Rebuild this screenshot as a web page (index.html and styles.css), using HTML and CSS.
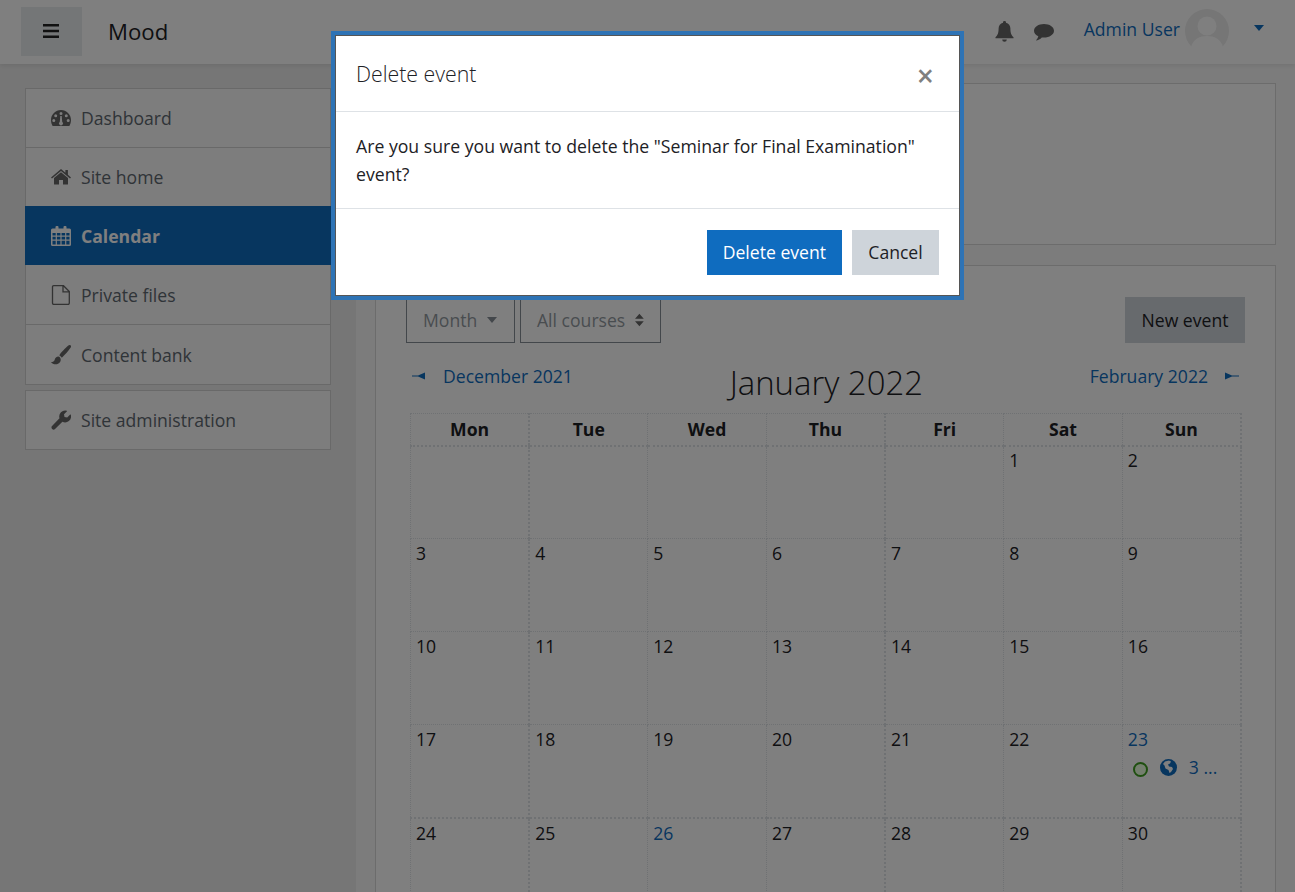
FILE: index.html
```html
<!DOCTYPE html>
<html lang="en">
<head>
    <meta charset="UTF-8">
    <title>Mood: Calendar</title>
    <link rel="stylesheet" href="styles.css">
</head>
<body>
    <header class="navbar">
        <button class="nav-toggle" aria-label="Menu">
            <svg width="16" height="14" viewBox="0 0 16 14"><path d="M0 0h16v2.6H0zM0 5.7h16v2.6H0zM0 11.4h16V14H0z" fill="#222"/></svg>
        </button>
        <span class="brand">Mood</span>
        <div class="nav-right">
            <svg class="nav-icon bell" width="19" height="21" viewBox="0 0 18 20"><path d="M9 0a1.4 1.4 0 0 1 1.4 1.6C13 2.200 14.600 4.300 14.600 7c0 5 1 6.500 3 8.500V16.500H.4V15.500c2-2 3-3.500 3-8.500 0-2.700 1.600-4.800 4.200-5.400A1.400 1.400 0 0 1 9 0zM6.800 17.500h4.400A2.200 2.200 0 0 1 9 19.800a2.200 2.200 0 0 1-2.200-2.300z" fill="#666"/></svg>
            <svg class="nav-icon msg" width="20" height="17" viewBox="0 0 20 17"><path d="M10 0c5.500 0 10 2.900 10 6.800s-4.500 6.800-10 6.800c-.8 0-1.500-.1-2.200-.2C6.300 15 4 16.300 1.800 16.500c1.300-1.200 2.200-2.700 2.500-4.200C1.700 11.100 0 9.100 0 6.800 0 2.900 4.500 0 10 0z" fill="#666"/></svg>
            <a class="user-name" href="#">Admin User</a>
            <span class="avatar">
                <svg width="44" height="44" viewBox="0 0 44 44"><circle cx="22" cy="22" r="22" fill="#ececec"/><circle cx="22" cy="17" r="9.500" fill="#fff"/><path d="M6 38c2-8 9-11 16-11s14 3 16 11a22 22 0 0 1-32 0z" fill="#fff"/></svg>
            </span>
            <span class="user-caret"></span>
        </div>
    </header>

    <div class="page">
        <aside class="drawer">
            <ul class="nav-list">
                <li class="nav-item">
                    <svg class="side-icon" viewBox="0 0 20 16"><path fill-rule="evenodd" d="M10 0C4.500 0 0 4.500 0 10c0 2.200.6 4.200 1.600 6h16.800c1-1.800 1.600-3.800 1.600-6C20 4.500 15.500 0 10 0zM10 2a1.500 1.500 0 1 1 0 3 1.500 1.500 0 0 1 0-3zM4.700 4.200a1.500 1.500 0 1 1 0 3 1.500 1.500 0 0 1 0-3zM15.300 4.200a1.500 1.500 0 1 1 0 3 1.500 1.500 0 0 1 0-3zM2.800 9a1.500 1.500 0 1 1 0 3 1.500 1.500 0 0 1 0-3zM17.200 9a1.500 1.500 0 1 1 0 3 1.500 1.500 0 0 1 0-3zM9.300 6h1.400l.5 5.700a2 2 0 1 1-2.400 0z" fill="#666"/></svg>
                    Dashboard
                </li>
                <li class="nav-item">
                    <svg class="side-icon" viewBox="0 0 20 16"><path d="M10 3.200 3 9v6a.6.6 0 0 0 .6.600H8v-4.500h4v4.500h4.400A.6.6 0 0 0 17 15V9zM20 8.400 16.900 5.800V1h-2.500v2.700L10 0 0 8.400l1 1.200L10 2l9 7.600z" fill="#666"/></svg>
                    Site home
                </li>
                <li class="nav-item active">
                    <svg class="side-icon" viewBox="0 0 20 20"><path fill-rule="evenodd" d="M1.500 2.500H4.500V1a1 1 0 0 1 1-1h1a1 1 0 0 1 1 1v1.500h5V1a1 1 0 0 1 1-1h1a1 1 0 0 1 1 1v1.500h3A1.500 1.500 0 0 1 20 4v14.500a1.500 1.500 0 0 1-1.500 1.500h-17A1.500 1.500 0 0 1 0 18.500V4a1.500 1.500 0 0 1 1.500-1.500zM1.500 7v2.500h3.200V7zM5.900 7v2.500h3.500V7zM10.600 7v2.500h3.500V7zM15.300 7v2.500h3.200V7zM1.500 10.700v2.800h3.200v-2.800zM5.900 10.700v2.800h3.500v-2.800zM10.600 10.700v2.800h3.500v-2.800zM15.300 10.700v2.800h3.200v-2.800zM1.500 14.700v3.800h3.200v-3.800zM5.900 14.700v3.800h3.500v-3.800zM10.600 14.700v3.800h3.500v-3.800zM15.300 14.700v3.800h3.200v-3.800z" fill="#fff"/></svg>
                    Calendar
                </li>
                <li class="nav-item">
                    <svg class="side-icon" viewBox="0 0 18 20"><path d="M1.700.7h9.800l5.800 5.800v11.600a1.200 1.200 0 0 1-1.200 1.200H1.700a1.200 1.200 0 0 1-1.200-1.200V1.900A1.200 1.200 0 0 1 1.700.7zM11 1v5.800h6" fill="none" stroke="#666" stroke-width="1.300"/></svg>
                    Private files
                </li>
                <li class="nav-item">
                    <svg class="side-icon" viewBox="0 0 20 20"><path d="M19.500.3c-.6-.5-1.500-.3-2.200.3C14.500 3 9.500 8 8.300 10.400c.9.300 2 1.300 2.400 2.400C13 11 17.500 6 19.700 2.600c.5-.8.400-1.800-.2-2.300zM7.500 11.500c-2 0-3.500 1.300-3.800 3.200C3.400 16.300 2 17 0 17c1.300 2 4.500 3 7 1.800 2.300-1 3-3 2.600-5-.3-1.300-1-2.100-2.100-2.300z" fill="#666"/></svg>
                    Content bank
                </li>
            </ul>
            <ul class="nav-list second">
                <li class="nav-item">
                    <svg class="side-icon" viewBox="0 0 20 20"><path d="M19.800 4.700c-.1-.3-.4-.4-.6-.2l-3 3-2.700-.5-.5-2.700 3-3c.2-.2.100-.5-.2-.6a6 6 0 0 0-7.300 7.500L.8 16.300a2.200 2.200 0 0 0 3 3l7.600-7.600a6 6 0 0 0 8.400-7z" fill="#666"/></svg>
                    Site administration
                </li>
            </ul>
        </aside>

        <main class="content">
            <div class="top-card"></div>
            <section class="calendar-card">
                <div class="controls">
                    <span class="select month-select">Month<span class="caret-down"></span></span>
                    <span class="select course-select">All courses
                        <svg class="sort" width="10" height="14" viewBox="0 0 10 14"><path d="M5 0l5 5.500H0zM5 14 0 8.500h10z" fill="#666"/></svg>
                    </span>
                    <span class="new-event">New event</span>
                </div>
                <div class="month-nav">
                    <a href="#" class="arrow-link"><svg class="arrow" width="14" height="8" viewBox="0 0 14 8"><path d="M0 3.500H6L13 .5V7.500L6 4.500H0z" fill="#0f6cbf"/></svg>December 2021</a>
                    <h2 class="month-title">January 2022</h2>
                    <a href="#" class="arrow-link">February 2022<svg class="arrow right" width="14" height="8" viewBox="0 0 14 8"><path d="M14 3.500H7L0 .5V7.500L7 4.500H14z" fill="#0f6cbf"/></svg></a>
                </div>
                <table class="month-table">
                    <thead>
                        <tr><th>Mon</th><th>Tue</th><th>Wed</th><th>Thu</th><th>Fri</th><th>Sat</th><th>Sun</th></tr>
                    </thead>
                    <tbody>
                        <tr><td></td><td></td><td></td><td></td><td></td><td>1</td><td>2</td></tr>
                        <tr><td>3</td><td>4</td><td>5</td><td>6</td><td>7</td><td>8</td><td>9</td></tr>
                        <tr><td>10</td><td>11</td><td>12</td><td>13</td><td>14</td><td>15</td><td>16</td></tr>
                        <tr><td>17</td><td>18</td><td>19</td><td>20</td><td>21</td><td>22</td>
                            <td class="link">23
                                <div class="event-line">
                                    <span class="dot"></span>
                                    <svg class="globe" width="17" height="17" viewBox="0 0 17 17"><circle cx="8.500" cy="8.500" r="8.500" fill="#0f6cbf"/><path d="M5 2.500 9 1.500l2 1-1 2-2 1 1 2 3 .5 1 2-2 3-1.500 1-1-3-3-1.500-1-3L3 5z" fill="#fff"/></svg>
                                    <span class="event-more">3 ...</span>
                                </div>
                            </td></tr>
                        <tr><td>24</td><td>25</td><td class="link">26</td><td>27</td><td>28</td><td>29</td><td>30</td></tr>
                    </tbody>
                </table>
            </section>
        </main>
    </div>

    <div class="backdrop"></div>

    <div class="modal">
        <div class="modal-head">
            <h5 class="modal-title">Delete event</h5>
            <span class="modal-close">&times;</span>
        </div>
        <div class="modal-body">Are you sure you want to delete the "Seminar for Final Examination" event?</div>
        <div class="modal-foot">
            <button class="btn btn-primary">Delete event</button>
            <button class="btn btn-secondary">Cancel</button>
        </div>
    </div>
</body>
</html>
```

FILE: styles.css
```css
* {
    box-sizing: border-box;
}
html, body {
    height: 892px;
    overflow: hidden;
}
body {
    margin: 0;
    font-family: "Open Sans", sans-serif;
    font-size: 17.6px;
    color: #1d2125;
    background-color: #ededed;
}
a {
    color: #0f6cbf;
    text-decoration: none;
}
.navbar {
    height: 64px;
    display: flex;
    align-items: center;
    padding: 0 21px;
    background-color: #fff;
    box-shadow: 0 2px 4px rgba(0, 0, 0, 0.08);
    position: relative;
}
.nav-toggle {
    width: 61px;
    height: 49px;
    margin-top: -2px;
    padding: 0 2px 0 0;
    border: none;
    background-color: #e9ecef;
    display: flex;
    align-items: center;
    justify-content: center;
}
.brand {
    margin-left: 26px;
    margin-top: -2px;
    font-size: 22.2px;
}
.nav-right {
    margin-left: auto;
    display: flex;
    align-items: center;
    margin-right: 10px;
    margin-top: -6px;
}
.nav-icon {
    margin-right: 20px;
}
.nav-icon.bell {
    margin-top: 4px;
}
.nav-icon.msg {
    margin-right: 30px;
    margin-top: 6px;
}
.avatar {
    display: block;
    height: 44px;
    margin-left: 5px;
    margin-top: 4px;
}
.avatar svg {
    display: block;
}
.user-caret {
    margin-left: 25px;
    margin-top: -2px;
    border-left: 5.500px solid transparent;
    border-right: 5.500px solid transparent;
    border-top: 6px solid #0f6cbf;
}
.page {
    display: flex;
    height: 828px;
    overflow: hidden;
}
.drawer {
    width: 356px;
    flex-shrink: 0;
    padding: 24px 25px 0;
    background-color: #ededed;
}
.nav-list {
    list-style: none;
    margin: 0;
    padding: 0;
    background-color: #fafafa;
    border: 1px solid #d3d3d3;
}
.nav-list.second {
    margin-top: 5px;
}
.nav-list.second .nav-item {
    height: 58px;
}
.nav-item {
    height: 59px;
    display: flex;
    align-items: center;
    padding-left: 25px;
    color: #5f6870;
    border-bottom: 1px solid #d3d3d3;
}
.nav-item:last-child {
    border-bottom: none;
}
.nav-item.active {
    margin: -1px -1px 1px;
    padding-left: 26px;
    background-color: #0f6cbf;
    color: #fff;
    font-weight: 700;
    border-bottom: none;
}
.side-icon {
    width: 20px;
    height: 20px;
    margin-right: 10px;
    flex-shrink: 0;
}
.content {
    flex: 1;
    padding: 19px 19px 0 19px;
    background-color: #f9f9f9;
}
.top-card {
    height: 162px;
    background-color: #fff;
    border: 1px solid #d8d8d8;
}
.calendar-card {
    margin-top: 20px;
    height: 700px;
    padding: 31px 30px 0;
    background-color: #fff;
    border: 1px solid #d8d8d8;
}
.controls {
    display: flex;
    align-items: stretch;
    height: 46px;
    gap: 5px;
}
.select {
    display: flex;
    align-items: center;
    padding: 0 16px;
    border: 1px solid #868e96;
    color: #939aa1;
}
.month-select {
    width: 109px;
}
.course-select {
    width: 141px;
    white-space: nowrap;
}
.caret-down {
    margin-left: 10px;
    border-left: 5.500px solid transparent;
    border-right: 5.500px solid transparent;
    border-top: 6px solid #868e96;
}
.sort {
    margin-left: 10px;
}
.new-event {
    margin-left: auto;
    width: 120px;
    display: flex;
    align-items: center;
    justify-content: center;
    background-color: #ced4da;
}
.month-nav {
    display: flex;
    align-items: flex-start;
    justify-content: space-between;
    height: 70px;
    padding: 21px 6px 0;
}
.arrow-link {
    display: flex;
    align-items: center;
}
.arrow {
    margin-right: 17px;
}
.arrow.right {
    margin-right: 0;
    margin-left: 17px;
}
.month-title {
    margin: -3px 0 0 -10px;
    font-size: 32.9px;
    font-weight: 300;
    line-height: 44px;
}
.month-table {
    width: 832px;
    margin-left: 4px;
    border-collapse: collapse;
    table-layout: fixed;
}
.month-table th {
    height: 32px;
    padding: 0;
    font-weight: 700;
    text-align: center;
    border: 1px dotted #dee2e6;
    border-bottom: 2px dotted #dee2e6;
}
.month-table td {
    height: 93px;
    padding: 2px 5px;
    vertical-align: top;
    border: 1px dotted #dee2e6;
}
.month-table tbody tr:first-child td {
    padding-top: 1px;
}
.month-table th:nth-child(2),
.month-table td:nth-child(2),
.month-table th:nth-child(5),
.month-table td:nth-child(5) {
    border-left: 2px dotted #dee2e6;
}
.month-table th:last-child,
.month-table td:last-child {
    border-right: 2px dotted #dee2e6;
}
.month-table tr:last-child td {
    border-top: 2px dotted #dee2e6;
}
.month-table td.link {
    color: #0f6cbf;
}
.event-line {
    display: flex;
    align-items: center;
    margin: 4px 0 0 5px;
}
.dot {
    width: 15px;
    height: 15px;
    margin-top: 4px;
    border-radius: 50%;
    border: 2px solid #3f9f20;
    background-color: #eaffdf;
}
.globe {
    margin-left: 12px;
}
.event-more {
    margin-left: 12px;
}
.backdrop {
    position: fixed;
    inset: 0;
    background-color: #000;
    opacity: 0.5;
}
.modal {
    position: fixed;
    left: 335px;
    top: 35px;
    width: 625px;
    height: 261px;
    background-color: #fff;
    border: 1px solid #555;
    outline: 4px solid #2e73b5;
    display: flex;
    flex-direction: column;
}
.modal-head {
    height: 76px;
    display: flex;
    align-items: center;
    justify-content: space-between;
    padding: 0 25px 0 20px;
    border-bottom: 1px solid #dee2e6;
}
.modal-title {
    margin: 0;
    font-size: 21.3px;
    font-weight: 300;
}
.modal-close {
    font-size: 30px;
    font-weight: 600;
    color: #7f7f7f;
    margin-top: 4px;
}
.modal-body {
    height: 97px;
    padding: 20px 20px 0;
    font-size: 17.66px;
    line-height: 28px;
    border-bottom: 1px solid #dee2e6;
}
.modal-foot {
    flex: 1;
    display: flex;
    justify-content: flex-end;
    align-items: flex-start;
    gap: 10px;
    padding: 21px 20px 0 0;
}
.btn {
    height: 45px;
    border: none;
    font-family: inherit;
    font-size: 17.6px;
    padding: 0 16px 2px;
}
.btn-primary {
    background-color: #0f6cbf;
    color: #fff;
}
.btn-secondary {
    width: 87px;
    background-color: #ced4da;
    color: #1d2125;
}
```
